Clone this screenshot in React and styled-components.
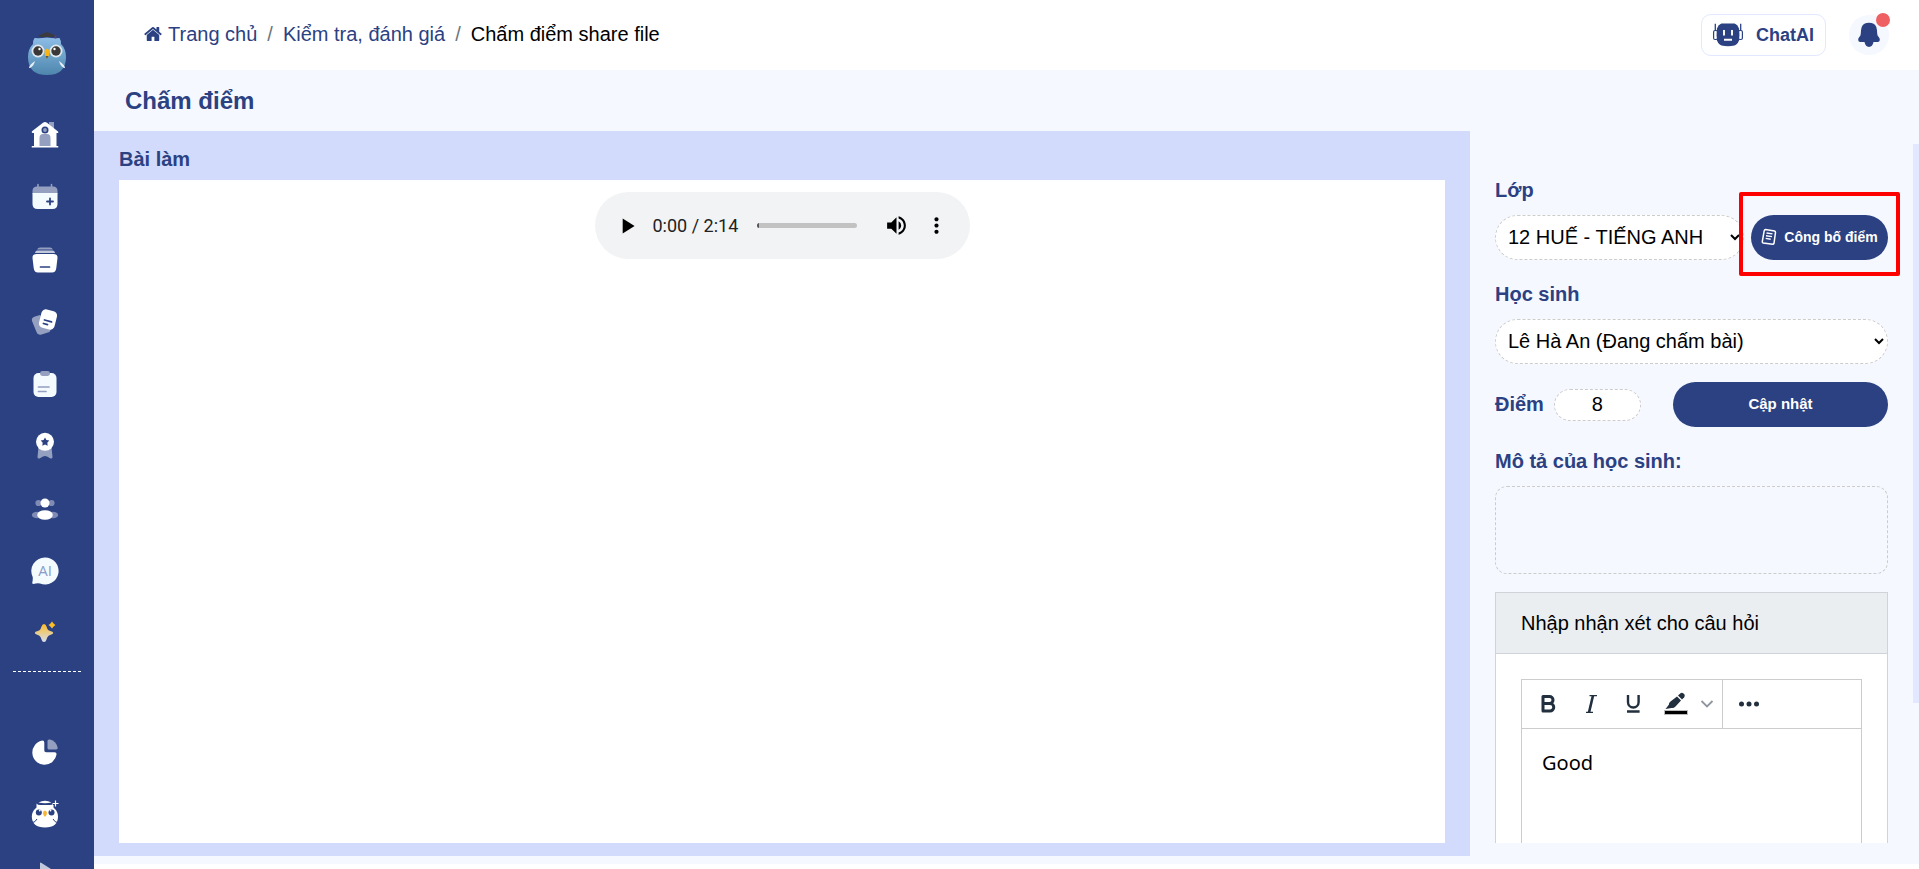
import { createGlobalStyle, styled } from "styled-components";
import { MdMoreVert, MdPlayArrow, MdVolumeUp } from "react-icons/md";

const NAVY = "#2b4182";
const SOFT = "#959fc0";

const GlobalStyle = createGlobalStyle`
  * {
    box-sizing: border-box;
  }
  body {
    margin: 0;
    font-family: "Liberation Sans", Arial, sans-serif;
    font-size: 20px;
    color: #000;
    background: #fff;
  }
  button, input, select, textarea {
    font-family: inherit;
    margin: 0;
  }
`;

const Page = styled.div`
  display: flex;
  height: 100vh;
  overflow: hidden;
`;
const SidebarWrapper = styled.aside`
  flex: none;
  width: 94px;
  overflow: hidden;
  background: ${NAVY};
`;
const Logo = styled.a`
  display: flex;
  justify-content: center;
  height: 121px;
  padding-top: 31px;
`;
const Menu = styled.nav`
  display: flex;
  flex-direction: column;
  justify-content: space-between;
  align-items: center;
  height: ${(props) => props.$height};
  padding-right: 4px;
`;
const MenuItem = styled.a`
  display: flex;
`;
const Divider = styled.div`
  margin: 24px 13px 66px;
  border-top: 1px dashed #fff;
`;
const Content = styled.div`
  flex: 1;
  min-width: 0;
  display: flex;
  flex-direction: column;
  padding-bottom: 5px;
`;
const HeaderWrapper = styled.header`
  flex: none;
  display: flex;
  justify-content: space-between;
  align-items: center;
  height: 70px;
  padding: 0 30px 0 50px;
`;
const Breadcrumb = styled.nav`
  display: flex;
  align-items: center;
  gap: 10px;
  padding-bottom: 2px;
  line-height: 24px;
`;
const Crumb = styled.a`
  display: flex;
  align-items: center;
  gap: 6px;
  color: ${NAVY};
  text-decoration: none;
`;
const Slash = styled.span`
  color: #6c757d;
`;
const Tools = styled.div`
  display: flex;
  align-items: center;
  gap: 23px;
`;
const ChatButton = styled.button`
  display: flex;
  align-items: center;
  justify-content: center;
  gap: 13px;
  width: 125px;
  height: 42px;
  padding: 0;
  border: 1px solid #e2e8ff;
  border-radius: 10px;
  background: #fff;
  color: ${NAVY};
  font-size: 18px;
  font-weight: 700;
`;
const BellButton = styled.button`
  position: relative;
  display: flex;
  align-items: center;
  justify-content: center;
  width: 40px;
  height: 40px;
  padding: 0;
  border: none;
  border-radius: 50%;
  background: #f5f8ff;
`;
const Dot = styled.span`
  position: absolute;
  top: -2px;
  right: -1px;
  width: 14px;
  height: 14px;
  border-radius: 50%;
  background: #ee6061;
`;
const Title = styled.h1`
  flex: none;
  margin: 0;
  padding-left: 31px;
  background: #f5f8ff;
  color: ${NAVY};
  font-size: 24px;
  line-height: 61px;
`;
const Main = styled.main`
  flex: 1;
  min-height: 0;
  display: grid;
  grid-template-columns: minmax(0, 1fr) 449px;
  grid-template-rows: minmax(0, 1fr);
  padding-bottom: 8px;
  background: #f5f8ff;
`;
const Work = styled.section`
  display: flex;
  flex-direction: column;
  padding: 7px 25px 13px;
  background: #d2dbfb;
`;
const WorkTitle = styled.h2`
  margin: 0;
  color: ${NAVY};
  font-size: 20px;
  line-height: 42px;
`;
const Sheet = styled.div`
  flex: 1;
  display: flex;
  justify-content: center;
  align-items: flex-start;
  padding-top: 12px;
  background: #fff;
`;
const PlayerWrapper = styled.div`
  display: flex;
  align-items: center;
  width: 375px;
  height: 67px;
  padding: 0 13px 0 12px;
  border-radius: 34px;
  background: #f1f3f4;
`;
const PlayerButton = styled.button`
  flex: none;
  display: flex;
  align-items: center;
  justify-content: center;
  width: 40px;
  height: 40px;
  padding: 0;
  border: none;
  background: none;
  color: #000;
`;
const Time = styled.span`
  padding: 0 19px 0 6px;
  color: #222;
  font-family: Roboto, sans-serif;
  font-size: 18px;
  white-space: nowrap;
`;
const Seek = styled.input`
  flex: 1;
  min-width: 0;
  height: 5px;
  margin-right: 20px;
  appearance: none;
  border-radius: 3px;
  background: #c2c2c3;
  overflow: hidden;
  &::-webkit-slider-thumb {
    appearance: none;
    width: 2px;
    height: 5px;
    background: #555;
  }
`;
const Panel = styled.aside`
  display: flex;
  min-height: 0;
  padding: 13px 0;
`;
const Form = styled.div`
  flex: 1;
  min-width: 0;
  display: flex;
  flex-direction: column;
  gap: 18px;
  padding: 30px 25px 0;
  overflow: hidden;
`;
const Label = styled.label`
  display: block;
  margin-bottom: 9px;
  color: ${NAVY};
  font-weight: 700;
  line-height: 32px;
`;
const Row = styled.div`
  display: flex;
  gap: 7px;
`;
const Select = styled.select`
  flex: 1;
  min-width: 0;
  height: 45px;
  padding: 0 8px 2px;
  border: 1px dashed #ccc;
  border-radius: 23px;
  background: #fff;
  color: #000;
  font-size: 20px;
`;
const Button = styled.button`
  display: flex;
  align-items: center;
  justify-content: center;
  gap: 7px;
  width: ${(props) => props.$width};
  height: 45px;
  padding: 0 0 2px;
  border: none;
  border-radius: 23px;
  background: ${NAVY};
  color: #fff;
  font-size: ${(props) => props.$size};
  font-weight: 700;
  white-space: nowrap;
`;
const Publish = styled.div`
  position: relative;
`;
const Highlight = styled.div`
  position: absolute;
  inset: -23px -12px -16px;
  border: 4px solid #ff0000;
  border-radius: 2px;
  pointer-events: none;
`;
const ScoreRow = styled.div`
  display: flex;
  align-items: center;
  ${Button} {
    margin-left: auto;
  }
`;
const ScoreLabel = styled.label`
  margin-right: 10px;
  color: ${NAVY};
  font-weight: 700;
`;
const Score = styled.input`
  width: 87px;
  height: 32px;
  border: 1px dashed #ccc;
  border-radius: 16px;
  background: #fff;
  font-size: 20px;
  text-align: center;
`;
const Note = styled.textarea`
  display: block;
  width: 100%;
  height: 88px;
  border: 1px dashed #ccc;
  border-radius: 12px;
  background: transparent;
  resize: none;
`;
const Card = styled.section`
  border: 1px solid #ced4da;
  background: #fff;
`;
const CardHeader = styled.div`
  padding: 0 25px;
  border-bottom: 1px solid #ced4da;
  background: #eaeef1;
  line-height: 60px;
`;
const CardBody = styled.div`
  padding: 25px;
`;
const EditorWrapper = styled.div`
  border: 1px solid #ccc;
`;
const Toolbar = styled.div`
  display: flex;
  height: 49px;
  border-bottom: 1px solid #ccc;
`;
const ToolGroup = styled.div`
  display: flex;
  align-items: center;
  gap: 1px;
  padding: 0 5px;
  & + & {
    border-left: 1px solid #ccc;
  }
`;
const ToolButton = styled.button`
  display: flex;
  align-items: center;
  justify-content: center;
  width: ${(props) => props.$width || "42px"};
  height: 40px;
  padding: 0;
  border: none;
  background: none;
`;
const EditorText = styled.textarea`
  display: block;
  width: 100%;
  height: 240px;
  padding: 20px;
  border: none;
  font-family: "Noto Sans", sans-serif;
  font-size: 20px;
  line-height: 28px;
  resize: none;
`;
const Track = styled.div`
  flex: none;
  width: 6px;
`;
const Thumb = styled.div`
  height: 80%;
  background: #e2e8ff;
`;

const LogoOwl = () => (
  <svg width="40" height="46" viewBox="0 0 40 46">
    <defs>
      <linearGradient id="owl" x1="0" y1="0" x2="0" y2="1">
        <stop offset="0" stopColor="#8dbde6" />
        <stop offset="1" stopColor="#4d86ac" />
      </linearGradient>
    </defs>
    <path
      d="M7.500 7 Q13 7.500 20 6.500 Q27 7.500 32.500 7 Q34 9 34 13 Q39 18 39 26 Q39 44 20 44 Q1 44 1 26 Q1 18 6 13 Q6 9 7.500 7Z"
      fill="url(#owl)"
    />
    <path d="M11 4.500 20 1l9 3.500-3 1.500H14z" fill="#3c3c40" />
    <path d="M28.500 4.500v3" stroke="#7a3560" strokeWidth="1.500" />
    <circle cx="11" cy="20" r="6.500" fill="#dfe7ee" />
    <circle cx="29" cy="20" r="6.500" fill="#dfe7ee" />
    <circle cx="11" cy="20" r="4.700" fill="#3a3837" />
    <circle cx="29" cy="20" r="4.700" fill="#3a3837" />
    <circle cx="12.500" cy="18" r="1.200" fill="#fff" />
    <circle cx="27.500" cy="18" r="1.200" fill="#fff" />
    <path d="M17.500 20q2.500-5 5 0 .5 4-2.500 8-3-4-2.500-8z" fill="#f7b414" />
    <path d="M18.500 25h3L20 28z" fill="#555" />
    <path d="M2 37q0-3 6-7-1 5-5 7zM38 37q0-3-6-7 1 5 5 7z" fill="#e4eef5" />
  </svg>
);

const HouseIcon = () => (
  <svg width="28" height="28" viewBox="0 0 28 28">
    <path d="M18 1h5v9h-5z" fill={SOFT} />
    <path
      d="M12 1.700q2-1.400 4 0L27 10.500q1 1.500-1 1.500h-.5v13H27q1 1 0 1.500H1q-1-.5 0-1.500h2V12H1.500Q0 11.500 1 10.200z"
      fill="#fff"
    />
    <circle cx="14" cy="9" r="3.500" fill={NAVY} />
    <circle cx="14" cy="9" r="1.900" fill={SOFT} />
    <path d="M8.500 25v-8q0-4 3.500-4h4q3.500 0 3.500 4v8z" fill={SOFT} />
  </svg>
);

const CalendarIcon = () => (
  <svg width="28" height="28" viewBox="0 0 28 28">
    <path d="M7 1.500v4M20.500 1.500v4" stroke={SOFT} strokeWidth="1.600" strokeLinecap="round" />
    <path d="M1.500 11V8q0-4.500 4.500-4.500h16q4.500 0 4.500 4.500v3z" fill={SOFT} />
    <path d="M1.500 10h25v11q0 5-5 5h-15q-5 0-5-5z" fill="#f3fbff" />
    <path d="M19 15.500v6M16 18.500h6" stroke={NAVY} strokeWidth="1.800" strokeLinecap="round" />
  </svg>
);

const BoxIcon = () => (
  <svg width="28" height="28" viewBox="0 0 28 28">
    <path d="M6 3.500Q7 1.500 9 1.500h10q2 0 3 2z" fill={SOFT} />
    <path d="M4.500 5.500q1-1 2-1h15q1 0 2 1l.5 1.500H4z" fill="#c3c9dd" />
    <path
      d="M5.500 8h17q4.300 0 4 4l-1.200 10q-.5 4.500-4.300 4.500H7q-3.800 0-4.300-4.500L1.500 12q-.3-4 4-4z"
      fill="#fff"
    />
    <path d="M9.500 21h9" stroke={NAVY} strokeWidth="1.700" strokeLinecap="round" />
  </svg>
);

const CardsIcon = () => (
  <svg width="28" height="28" viewBox="0 0 28 28">
    <path d="M4 8.500 9 7l11 14-1.500 3-8 2.500q-4 1-5-2.500L1 13q-1-3.500 3-4.500z" fill={SOFT} />
    <rect x="9" y="2" width="16" height="19" rx="4.500" fill="#fff" transform="rotate(14 17 11.500)" />
    <path d="m13.500 12 7 1.900M12.500 15.500l4 1.100" stroke={NAVY} strokeWidth="1.800" strokeLinecap="round" />
  </svg>
);

const ClipboardIcon = () => (
  <svg width="28" height="28" viewBox="0 0 28 28">
    <rect x="2.500" y="3" width="23" height="24" rx="5" fill="#f3fbff" />
    <rect x="9" y="1" width="10" height="5" rx="2.400" fill={SOFT} />
    <path d="M7.500 17h10.500M7.500 21.500h7.500" stroke={SOFT} strokeWidth="1.700" strokeLinecap="round" />
  </svg>
);

const MedalIcon = () => (
  <svg width="28" height="28" viewBox="0 0 28 28">
    <path
      d="M7.500 15h13l1 10q0 2-2 1.500l-3.500-2q-2-1-4 0l-3.500 2q-2 .5-2-1.500z"
      fill={SOFT}
    />
    <circle cx="14" cy="9.800" r="9" fill="#fff" />
    <path d="m14 5.500 1.400 2.600 2.900.5-2 2.200.4 3L14 12.500l-2.700 1.300.4-3-2-2.200 2.900-.5z" fill={NAVY} />
  </svg>
);

const PeopleIcon = () => (
  <svg width="28" height="28" viewBox="0 0 28 28">
    <g fill="#7f8bb4">
      <circle cx="7.500" cy="8" r="3.100" />
      <circle cx="20.500" cy="8" r="3.100" />
      <ellipse cx="6" cy="20" rx="5.200" ry="3.200" />
      <ellipse cx="22" cy="20" rx="5.200" ry="3.200" />
    </g>
    <circle cx="14" cy="8" r="4.500" fill="#fff" />
    <ellipse cx="14" cy="20" rx="7.800" ry="4.800" fill="#fff" />
  </svg>
);

const AiIcon = () => (
  <svg width="28" height="28" viewBox="0 0 28 28">
    <path
      d="M14 .5a13.500 13.500 0 1 1-5 26q-3-.5-6.500.5-1.500 0-1.200-1.500Q2 22.500 1.700 20A13.500 13.500 0 0 1 14 .5z"
      fill="#f3fbff"
    />
    <text x="14" y="19" textAnchor="middle" fontSize="15" fontFamily="Open Sans, sans-serif" fill="#8b9bc9">
      AI
    </text>
  </svg>
);

const SparkIcon = () => (
  <svg width="28" height="28" viewBox="0 0 28 28">
    <defs>
      <linearGradient id="spark" x1="0" y1="0" x2="0" y2="1">
        <stop offset="0" stopColor="#fcbd27" />
        <stop offset="1" stopColor="#d6ddf0" />
      </linearGradient>
    </defs>
    <path
      d="M13 5q1.800 0 2.500 2.500 1 4 3.700 4.600 3 .7 3 1.900t-3 1.900q-2.700.6-3.700 4.600Q14.800 23 13 23t-2.500-2.500q-1-4-3.700-4.600-3-.7-3-1.900t3-1.900q2.700-.6 3.700-4.600Q11.200 5 13 5z"
      fill="url(#spark)"
    />
    <path d="M21 2.500q1.500 2.300 3.500 3.500-2 1.200-3.500 3.500-1.500-2.300-3.500-3.500 2-1.200 3.500-3.500z" fill="#fcbd27" />
  </svg>
);

const PieIcon = () => (
  <svg width="28" height="28" viewBox="0 0 28 28">
    <path
      d="M11.500 2.500q1.800 0 1.800 2v8q0 1.800 1.800 1.800h8.500q2 0 2 2A12.200 12.200 0 1 1 11.500 2.500z"
      fill="#fff"
    />
    <path d="M16.500 3q0-2 2.500-1.500 6 1.500 7.500 7.500.5 2.500-1.500 2.500h-7q-1.500 0-1.500-1.500z" fill={SOFT} />
  </svg>
);

const OwlIcon = () => (
  <svg width="28" height="28" viewBox="0 0 28 28">
    <path d="M7.500 2.500Q14-1 20.500 2.500q-6.500 1.500-13 0z" fill="#fff" />
    <path
      d="M5.500 3.500q1 1.500 4 1.500h9q3 0 4-1.500v4q4.500 4 4.500 9 0 11-13 11T.8 16.500q0-5 4.700-9z"
      fill="#fff"
    />
    <circle cx="7.800" cy="12.500" r="3" fill={NAVY} />
    <circle cx="20.500" cy="12.500" r="3" fill={NAVY} />
    <circle cx="8.800" cy="10.500" r=".9" fill="#fff" />
    <circle cx="19.500" cy="10.500" r=".9" fill="#fff" />
    <path d="M14 10.500q2 .5 2 2.500 0 2-2 4-2-2-2-4 0-2 2-2.500z" fill="#f7b436" />
    <path d="M1.500 22.500q2.500 0 4.500-3.500M26.500 22.500q-2.500 0-4.500-3.500" stroke={NAVY} fill="none" />
    <path d="M24.500 1v5M22 3.500h5" stroke={NAVY} strokeWidth="3" />
    <path d="M24.500.5v6M21.500 3.500h6" stroke="#fff" strokeWidth="1.200" />
  </svg>
);

const ArrowIcon = () => (
  <svg width="28" height="28" viewBox="0 0 28 28">
    <path d="M9 1q0-1 1.500 0L20 7v19H9z" fill="#c3c9dd" />
  </svg>
);

const HomeIcon = () => (
  <svg width="18" height="18" viewBox="0 64 1664 1664" fill={NAVY}>
    <path d="M1408 992v480q0 26-19 45t-45 19H960v-384H704v384H320q-26 0-45-19t-19-45V992q0-1 .5-3t.5-3l575-474 575 474q1 2 1 6zm223-69-62 74q-8 9-21 11h-3q-13 0-21-7L832 424l-692 577q-12 8-24 7-13-2-21-11l-62-74q-8-10-7-23.500T37 878l719-599q32-26 76-26t76 26l244 204V288q0-14 9-23t23-9h192q14 0 23 9t9 23v408l219 182q10 8 11 21.500t-7 23.500z" />
  </svg>
);

const RobotIcon = () => (
  <svg width="30" height="24" viewBox="0 0 30 24">
    <path d="M2.300.8V8M27.700.8V8" stroke={NAVY} strokeWidth="1.300" />
    <rect x=".6" y="7.500" width="4" height="9" rx="1.500" fill="#fff" stroke={NAVY} strokeWidth="1.200" />
    <rect x="25.400" y="7.500" width="4" height="9" rx="1.500" fill="#fff" stroke={NAVY} strokeWidth="1.200" />
    <path d="M8.500.5h13q3 1 4.500 5 .8 6 0 12-1.500 4-4.500 5-6.500 1.500-13 0-3-1-4.500-5-.8-6 0-12 1.500-4 4.500-5z" fill={NAVY} />
    <path d="M11 7v5.500M19 7v5.500M11 16.700h8" stroke="#fff" strokeWidth="1.900" />
  </svg>
);

const BellIcon = () => (
  <svg width="24" height="26" viewBox="0 0 24 26">
    <path
      d="M12 .8q5.500 0 7.300 4.200.7 2 .9 6.500 0 2 1.500 3.600 1.300 1.300 1.100 3-.2 2-2 2h-4.300Q15.500 25 12 25t-4.500-4.900H3.200q-1.800 0-2-2-.2-1.700 1.100-3 1.500-1.600 1.500-3.600.2-4.500.9-6.500Q6.500.8 12 .8z"
      fill={NAVY}
    />
  </svg>
);

const ScoreIcon = () => (
  <svg width="16" height="18" viewBox="0 0 16 18" fill="none" stroke="#fff">
    <path d="M4.500 1.500 13.500 3q1 .3 1 1.300l-1.500 11q-.3 1-1.300 1l-9.500-1.300q-1-.3-.9-1.300L3.200 2.600q.3-1 1.300-1.100z" strokeWidth="1.500" />
    <path d="m5.500 5 6 .9M5 7.700l6 .9M4.700 10.400l5 .8" strokeWidth="1.400" />
  </svg>
);

const BoldIcon = () => (
  <svg width="24" height="24" viewBox="0 0 24 24" fill="none" stroke="#222f3e" strokeWidth="3">
    <path d="M7.500 11.500h6.500a3.700 3.700 0 0 1 0 7.500H7V4.500h6.500a3.500 3.500 0 0 1 0 7" strokeLinejoin="round" />
  </svg>
);

const ItalicIcon = () => (
  <svg width="24" height="24" viewBox="0 0 24 24" fill="none" stroke="#222f3e">
    <path d="M14 3.500 10 20.500" strokeWidth="2.600" />
    <path d="M10.500 3.600H18M7 20.400h7" strokeWidth="1.200" />
  </svg>
);

const UnderlineIcon = () => (
  <svg width="24" height="24" viewBox="0 0 24 24" fill="none" stroke="#222f3e" strokeWidth="2.400">
    <path d="M6 3v7.200a5.300 5.300 0 0 0 10.600 0V3M5 19.500h12.600" />
  </svg>
);

const MarkerIcon = () => (
  <svg width="24" height="24" viewBox="0 0 24 24">
    <path d="m14 3.500 2.500-2.300q1.500-1 3 .3l.7.800q1.200 1.500 0 3L18 7.500z" fill="#222f3e" />
    <path d="m13 4.500 4 4-5.500 6q-2 2-4 1.500L1.500 17l3.500-4.500q-.5-1.500 1.500-3z" fill="#222f3e" />
    <path d="M.5 18.500h23v4H.5z" fill="#000" stroke="#bbb" />
  </svg>
);

const ChevronIcon = () => (
  <svg width="14" height="10" viewBox="0 0 14 10">
    <path d="m1.500 2 5.500 5.500L12.500 2" fill="none" stroke="#9096a0" strokeWidth="1.800" />
  </svg>
);

const DotsIcon = () => (
  <svg width="22" height="6" viewBox="0 0 22 6" fill="#222f3e">
    <circle cx="3.500" cy="3" r="2.500" />
    <circle cx="11" cy="3" r="2.500" />
    <circle cx="18.500" cy="3" r="2.500" />
  </svg>
);

const mainMenu = [
  { name: "Trang chủ", icon: <HouseIcon /> },
  { name: "Lịch", icon: <CalendarIcon /> },
  { name: "Kho học liệu", icon: <BoxIcon /> },
  { name: "Bài giảng", icon: <CardsIcon /> },
  { name: "Kiểm tra", icon: <ClipboardIcon /> },
  { name: "Thành tích", icon: <MedalIcon /> },
  { name: "Lớp học", icon: <PeopleIcon /> },
  { name: "Trợ lý AI", icon: <AiIcon /> },
  { name: "Tính năng mới", icon: <SparkIcon /> },
];

const subMenu = [
  { name: "Thống kê", icon: <PieIcon /> },
  { name: "Cú thông thái", icon: <OwlIcon /> },
  { name: "Thêm", icon: <ArrowIcon /> },
];

const Sidebar = () => (
  <SidebarWrapper>
    <Logo href="#" aria-label="Logo">
      <LogoOwl />
    </Logo>
    <Menu $height="526px">
      {mainMenu.map((item) => (
        <MenuItem key={item.name} href="#" aria-label={item.name}>
          {item.icon}
        </MenuItem>
      ))}
    </Menu>
    <Divider />
    <Menu $height="152px">
      {subMenu.map((item) => (
        <MenuItem key={item.name} href="#" aria-label={item.name}>
          {item.icon}
        </MenuItem>
      ))}
    </Menu>
  </SidebarWrapper>
);

const Header = () => (
  <HeaderWrapper>
    <Breadcrumb>
      <Crumb href="#">
        <HomeIcon />
        Trang chủ
      </Crumb>
      <Slash>/</Slash>
      <Crumb href="#">Kiểm tra, đánh giá</Crumb>
      <Slash>/</Slash>
      <span>Chấm điểm share file</span>
    </Breadcrumb>
    <Tools>
      <ChatButton>
        <RobotIcon />
        ChatAI
      </ChatButton>
      <BellButton aria-label="Thông báo">
        <BellIcon />
        <Dot />
      </BellButton>
    </Tools>
  </HeaderWrapper>
);

const Player = () => (
  <PlayerWrapper>
    <PlayerButton aria-label="Phát">
      <MdPlayArrow size={26} />
    </PlayerButton>
    <Time>0:00 / 2:14</Time>
    <Seek type="range" min="0" max="134" defaultValue="0" aria-label="Tua" />
    <PlayerButton aria-label="Âm lượng">
      <MdVolumeUp size={25} />
    </PlayerButton>
    <PlayerButton aria-label="Tùy chọn">
      <MdMoreVert size={25} />
    </PlayerButton>
  </PlayerWrapper>
);

const Editor = () => (
  <EditorWrapper>
    <Toolbar>
      <ToolGroup>
        <ToolButton aria-label="Đậm">
          <BoldIcon />
        </ToolButton>
        <ToolButton aria-label="Nghiêng">
          <ItalicIcon />
        </ToolButton>
        <ToolButton aria-label="Gạch chân">
          <UnderlineIcon />
        </ToolButton>
        <ToolButton $width="40px" aria-label="Tô màu">
          <MarkerIcon />
        </ToolButton>
        <ToolButton $width="20px" aria-label="Chọn màu">
          <ChevronIcon />
        </ToolButton>
      </ToolGroup>
      <ToolGroup>
        <ToolButton aria-label="Thêm công cụ">
          <DotsIcon />
        </ToolButton>
      </ToolGroup>
    </Toolbar>
    <EditorText defaultValue="Good" aria-label="Nhận xét" spellCheck={false} />
  </EditorWrapper>
);

const GradePanel = () => (
  <Panel>
    <Form>
      <div>
        <Label htmlFor="class">Lớp</Label>
        <Row>
          <Select id="class">
            <option>12 HUẾ - TIẾNG ANH</option>
          </Select>
          <Publish>
            <Button $width="137px" $size="14px">
              <ScoreIcon />
              Công bố điểm
            </Button>
            <Highlight />
          </Publish>
        </Row>
      </div>
      <div>
        <Label htmlFor="student">Học sinh</Label>
        <Row>
          <Select id="student">
            <option>Lê Hà An (Đang chấm bài)</option>
          </Select>
        </Row>
      </div>
      <ScoreRow>
        <ScoreLabel htmlFor="score">Điểm</ScoreLabel>
        <Score id="score" defaultValue="8" />
        <Button $width="215px" $size="15px">
          Cập nhật
        </Button>
      </ScoreRow>
      <div>
        <Label htmlFor="note">Mô tả của học sinh:</Label>
        <Note id="note" readOnly />
      </div>
      <Card>
        <CardHeader>Nhập nhận xét cho câu hỏi</CardHeader>
        <CardBody>
          <Editor />
        </CardBody>
      </Card>
    </Form>
    <Track>
      <Thumb />
    </Track>
  </Panel>
);

const App = () => {
  return (
    <Page>
      <GlobalStyle />
      <Sidebar />
      <Content>
        <Header />
        <Title>Chấm điểm</Title>
        <Main>
          <Work>
            <WorkTitle>Bài làm</WorkTitle>
            <Sheet>
              <Player />
            </Sheet>
          </Work>
          <GradePanel />
        </Main>
      </Content>
    </Page>
  );
};

export default App;
